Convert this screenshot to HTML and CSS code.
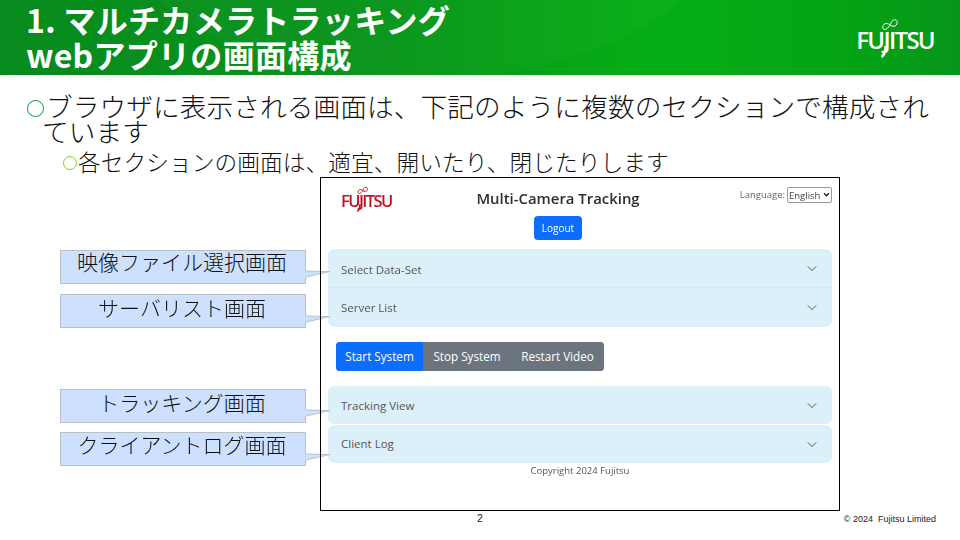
FILE: index.html
```html
<!DOCTYPE html>
<html lang="ja">
<head>
  <meta charset="UTF-8">
  <title>マルチカメラトラッキング webアプリの画面構成</title>
  <link rel="stylesheet" href="styles.css">
</head>
<body>
  <div class="slide">

    <header class="slide-header">
      <h1 class="slide-title">1. マルチカメラトラッキング<br>webアプリの画面構成</h1>
      <div class="logo logo-white">
        <svg class="logo-mark" viewBox="0 0 20 40"><path d="M12 7C10.500 9.500 8.500 11.500 6.800 11.500 5.200 11.500 4.500 10.200 4.700 8.800 5 7 6.500 5.500 8 5.500 9.500 5.500 11 6 12 7S14.500 8.200 16 8.200C17.800 8.200 19.200 6.200 19.200 4.400 19.200 2.800 18 1.800 16.500 1.800 14.500 1.800 13 4.500 12 7Z"/><path class="logo-tail" d="M7.500 28C7.500 34 6.500 37 3.500 39"/></svg>
        <span>FUJITSU</span>
      </div>
    </header>

    <section class="bullets">
      <p class="bullet-main">ブラウザに表示される画面は、下記のように複数のセクションで構成されています</p>
      <p class="bullet-sub">各セクションの画面は、適宜、開いたり、閉じたりします</p>
    </section>

    <section class="work">
      <div class="callouts">
        <div class="callout callout-select">映像ファイル選択画面
          <svg class="callout-tail" viewBox="0 0 26 12"><polygon class="tail-fill" points="0,0 25,.5 0,6"/><path class="tail-line" d="M1 0L25 .5L1 6"/><path class="tail-cross" d="M15.500 0V6"/></svg>
        </div>
        <div class="callout callout-server">サーバリスト画面
          <svg class="callout-tail" viewBox="0 0 26 12"><polygon class="tail-fill" points="0,0 25,.5 0,6"/><path class="tail-line" d="M1 0L25 .5L1 6"/><path class="tail-cross" d="M15.500 0V6"/></svg>
        </div>
        <div class="callout callout-tracking">トラッキング画面
          <svg class="callout-tail" viewBox="0 0 26 12"><polygon class="tail-fill" points="0,0 25,.5 0,6"/><path class="tail-line" d="M1 0L25 .5L1 6"/><path class="tail-cross" d="M15.500 0V6"/></svg>
        </div>
        <div class="callout callout-log">クライアントログ画面
          <svg class="callout-tail" viewBox="0 0 26 12"><polygon class="tail-fill" points="0,0 25,.5 0,6"/><path class="tail-line" d="M1 0L25 .5L1 6"/><path class="tail-cross" d="M15.500 0V6"/></svg>
        </div>
      </div>

      <div class="app">
        <div class="app-inner">
          <div class="app-top">
            <div class="logo logo-red">
              <svg class="logo-mark" viewBox="0 0 20 40"><path d="M12 7C10.500 9.500 8.500 11.500 6.800 11.500 5.200 11.500 4.500 10.200 4.700 8.800 5 7 6.500 5.500 8 5.500 9.500 5.500 11 6 12 7S14.500 8.200 16 8.200C17.800 8.200 19.200 6.200 19.200 4.400 19.200 2.800 18 1.800 16.500 1.800 14.500 1.800 13 4.500 12 7Z"/><path class="logo-tail" d="M7.500 28C7.500 34 6.500 37 3.500 39"/></svg>
              <span>FUJITSU</span>
            </div>
            <div class="app-heading">
              <h2>Multi-Camera Tracking</h2>
              <button class="btn btn-blue btn-logout">Logout</button>
            </div>
            <div class="lang">
              <label for="lang">Language:</label>
              <div class="lang-select">
                <select id="lang"><option>English</option></select>
                <svg class="lang-arrow" viewBox="0 0 8 6"><path d="M1 1.500L4 4.500L7 1.500"/></svg>
              </div>
            </div>
          </div>

          <div class="accordion">
            <div class="acc-item">Select Data-Set
              <svg class="chevron" viewBox="0 0 12 8"><path d="M1 1.500L6 6.500L11 1.500"/></svg>
            </div>
            <div class="acc-item">Server List
              <svg class="chevron" viewBox="0 0 12 8"><path d="M1 1.500L6 6.500L11 1.500"/></svg>
            </div>
          </div>

          <div class="btn-group">
            <button class="btn btn-blue">Start System</button>
            <button class="btn btn-gray">Stop System</button>
            <button class="btn btn-gray">Restart Video</button>
          </div>

          <div class="accordion accordion-split">
            <div class="acc-item">Tracking View
              <svg class="chevron" viewBox="0 0 12 8"><path d="M1 1.500L6 6.500L11 1.500"/></svg>
            </div>
            <div class="acc-item">Client Log
              <svg class="chevron" viewBox="0 0 12 8"><path d="M1 1.500L6 6.500L11 1.500"/></svg>
            </div>
          </div>

          <p class="app-copy">Copyright 2024 Fujitsu</p>
        </div>
      </div>
    </section>

    <footer class="slide-footer">
      <span></span>
      <span class="page-no">2</span>
      <span class="slide-copy">© 2024&nbsp; Fujitsu Limited</span>
    </footer>

  </div>
</body>
</html>
```

FILE: styles.css
```css
/* General Styles */
* {
  box-sizing: border-box;
}

body {
  margin: 0;
  background: #fff;
  font-family: "Noto Sans CJK JP", "Noto Sans", sans-serif;
  color: #111;
}

.slide {
  width: 960px;
  height: 540px;
  overflow: hidden;
  display: flex;
  flex-direction: column;
}

/* Green title band */
.slide-header {
  height: 75px;
  flex: none;
  display: flex;
  justify-content: space-between;
  padding: 0 26px 0 26px;
  background:
    radial-gradient(ellipse 310px 170px at 420px -90px, rgba(255, 255, 255, 0.025) 99%, transparent 100%),
    linear-gradient(90deg, #078b1e 0%, #079419 40%, #05ad14 68%, #04a414 88%, #07951c 100%);
}

.slide-title {
  margin: 0;
  padding-top: 2px;
  font-size: 32px;
  line-height: 34.5px;
  font-weight: 700;
  letter-spacing: 0.3px;
  color: #fff;
  white-space: nowrap;
}

/* Logos */
.logo {
  position: relative;
  font-family: "Open Sans", sans-serif;
  font-weight: 600;
  line-height: 1;
  white-space: nowrap;
}

.logo-mark {
  position: absolute;
  display: block;
  fill: none;
  stroke: currentColor;
  overflow: visible;
}

.logo-tail {
  stroke-width: 2.5;
}

.logo-white {
  margin-top: 28px;
  height: 26px;
  font-size: 24px;
  letter-spacing: -1.7px;
  color: #fff;
}

.logo-white .logo-mark {
  left: 22px;
  top: -10px;
  width: 20px;
  height: 40px;
}

.logo-red {
  margin: 15px 0 0 13px;
  height: 16px;
  font-size: 16.5px;
  font-weight: 600;
  letter-spacing: -1.55px;
  color: #c0111f;
}

.logo-red .logo-mark {
  left: 14px;
  top: -7px;
  width: 13px;
  height: 26px;
  stroke-width: 1.5;
}

/* Bullets */
.bullets {
  padding: 18px 20px 0 42px;
  height: 102px;
  flex: none;
}

.bullet-main,
.bullet-sub {
  position: relative;
  margin: 0;
}

.bullet-main {
  font-size: 26.67px;
  line-height: 25px;
  font-weight: 300;
  letter-spacing: 0.1px;
  text-indent: 4px;
}

.bullet-main::before {
  content: "";
  position: absolute;
  left: -15px;
  top: 7px;
  width: 15px;
  height: 15px;
  border: 1.5px solid #0f8f36;
  border-radius: 50%;
}

.bullet-sub {
  margin: 6px 0 0 36px;
  font-size: 22.67px;
  line-height: 26px;
  font-weight: 300;
  letter-spacing: 0.1px;
}

.bullet-sub::before {
  content: "";
  position: absolute;
  left: -15px;
  top: 7px;
  width: 12px;
  height: 12px;
  border: 1.5px solid #7ed321;
  border-radius: 50%;
}

/* Callouts and app window */
.work {
  display: flex;
  flex: none;
  padding-left: 60px;
}

.callouts {
  width: 246px;
  flex: none;
  padding-top: 73px;
  display: flex;
  flex-direction: column;
  position: relative;
  z-index: 2;
}

.callout {
  position: relative;
  height: 34px;
  padding-right: 2px;
  background: #cde1fe;
  border: 1px solid #b9c0c6;
  font-size: 21px;
  font-weight: 300;
  line-height: 24px;
  text-align: center;
  white-space: nowrap;
  color: #111;
}

.callout-select {
  line-height: 21px;
}

.callout-server {
  margin-top: 10px;
}

.callout-tracking {
  margin-top: 61px;
}

.callout-log {
  margin-top: 9px;
  line-height: 22px;
}

.callout-tail {
  position: absolute;
  left: 100%;
  top: 20px;
  width: 26px;
  height: 12px;
  overflow: visible;
}

.callout-server .callout-tail,
.callout-log .callout-tail {
  top: 21px;
}

.tail-fill {
  fill: #cde1fe;
}

.tail-line {
  fill: none;
  stroke: #b9c0c6;
  stroke-width: 1;
}

.tail-cross {
  stroke: #000;
  stroke-width: 1;
}

.app {
  width: 520px;
  height: 334px;
  margin-left: 14px;
  border: 1px solid #000;
  background: #fff;
  padding: 0 7px;
}

.app-inner {
  font-family: "Open Sans", sans-serif;
  color: #444;
  filter: blur(0.3px);
}

.app-top {
  height: 71px;
  display: grid;
  grid-template-columns: 80px 300px 124px;
}

.app-heading {
  text-align: center;
  padding-top: 9px;
}

.app-heading h2 {
  margin: 0;
  font-size: 14.9px;
  line-height: 22px;
  font-weight: 600;
  color: #2b2f33;
}

.btn {
  border: 0;
  font-family: inherit;
  color: #fff;
  padding: 0;
}

.btn-blue {
  background: #0d6efd;
}

.btn-gray {
  background: #6c757d;
}

.btn-logout {
  display: block;
  width: 48px;
  height: 24px;
  margin: 7px auto 0;
  border-radius: 4px;
  font-size: 10px;
}

.lang {
  display: flex;
  justify-content: flex-end;
  align-items: flex-start;
  gap: 2px;
  padding-top: 9px;
  font-size: 9.5px;
  color: #666;
}

.lang label {
  line-height: 16px;
}

.lang-select {
  position: relative;
  width: 45px;
  height: 16px;
}

.lang-select select {
  appearance: none;
  display: block;
  width: 100%;
  height: 100%;
  padding: 0 0 0 1px;
  font-family: inherit;
  font-size: 9.5px;
  color: #444;
  background: #fff;
  border: 1px solid #999;
  border-radius: 2px;
}

.lang-arrow {
  position: absolute;
  right: 2px;
  top: 5px;
  width: 7px;
  height: 5px;
  fill: none;
  stroke: #222;
  stroke-width: 1.6;
}

/* Accordion rows */
.accordion {
  border-radius: 6px;
  overflow: hidden;
  background: #dcf0fa;
}

.acc-item {
  position: relative;
  height: 39px;
  padding: 0 13px;
  font-size: 11.5px;
  line-height: 40px;
  color: #555;
  border-bottom: 1px solid #d3e7f1;
}

.acc-item:first-child {
  line-height: 41px;
}

.acc-item:last-child {
  border-bottom: 0;
}

.accordion-split {
  background: none;
  border-radius: 0;
  display: flex;
  flex-direction: column;
  gap: 1px;
}

.accordion-split .acc-item {
  height: 38px;
  border: 0;
  border-radius: 6px;
  background: #dcf0fa;
}

.accordion-split .acc-item:first-child {
  line-height: 40px;
}

.accordion-split .acc-item:last-child {
  line-height: 38px;
}

.chevron {
  position: absolute;
  right: 15px;
  top: 16px;
  width: 10px;
  height: 7px;
  fill: none;
  stroke: #444;
  stroke-width: 1.1;
}

.btn-group {
  display: flex;
  width: 268px;
  height: 29px;
  margin: 15px 0 15px 8px;
  border-radius: 4px;
  overflow: hidden;
  background: #6c757d;
}

.btn-group .btn {
  font-size: 11.7px;
  line-height: 29px;
}

.btn-group .btn:nth-child(1) {
  width: 87px;
}

.btn-group .btn:nth-child(2) {
  width: 88px;
}

.btn-group .btn:nth-child(3) {
  width: 93px;
}

.app-copy {
  margin: 1px 0 0;
  text-align: center;
  font-size: 9.5px;
  line-height: 14px;
  color: #555;
}

/* Slide footer */
.slide-footer {
  display: grid;
  grid-template-columns: 1fr 1fr;
  position: relative;
  height: 16px;
  padding-right: 24px;
  font-family: "Liberation Sans", sans-serif;
  line-height: 14px;
  color: #222;
}

.page-no {
  position: absolute;
  left: 477px;
  top: 0;
  font-size: 10.5px;
}

.slide-copy {
  padding-top: 1px;
  text-align: right;
  font-size: 9px;
}
```
